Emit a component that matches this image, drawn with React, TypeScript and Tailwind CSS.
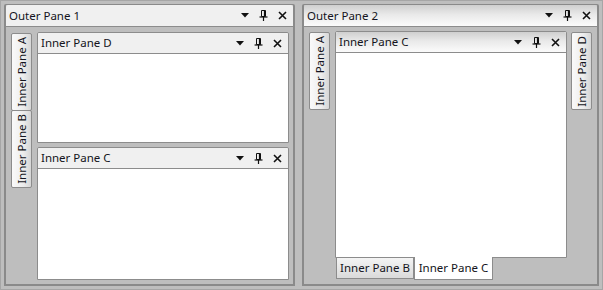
import React from 'react';

const font = { fontFamily: '"Noto Sans", "Open Sans", sans-serif' };

function PaneIcons() {
  return (
    <div className="flex items-center h-full">
      {/* dropdown */}
      <div className="w-[19px] flex justify-center">
        <svg width="8" height="5" viewBox="0 0 8 5">
          <path d="M0 0 H8 L4 4.5 Z" fill="#111" />
        </svg>
      </div>
      {/* pin */}
      <div className="w-[19px] flex justify-center">
        <svg width="9" height="11" viewBox="0 0 9 11">
          <path d="M2.5 0.5 H6.5 V6.5 H2.5 Z" fill="none" stroke="#111" strokeWidth="1" />
          <path d="M5.5 0.5 V6.5" stroke="#111" strokeWidth="1.2" />
          <path d="M0.5 7 H8.5" stroke="#111" strokeWidth="1.2" />
          <path d="M4.5 7 V11" stroke="#111" strokeWidth="1.2" />
        </svg>
      </div>
      {/* close */}
      <div className="w-[19px] flex justify-center">
        <svg width="9" height="9" viewBox="0 0 9 9">
          <path d="M1 1 L8 8 M8 1 L1 8" stroke="#111" strokeWidth="1.6" />
        </svg>
      </div>
    </div>
  );
}

function Header({ title, active, outer }: { title: string; active?: boolean; outer?: boolean }) {
  const bg = active
    ? 'bg-[linear-gradient(to_bottom,#cfcfcf,#e9e9e9_45%,#fbfbfb)]'
    : 'bg-[#f0f0f0]';
  return (
    <div
      className={`flex items-center justify-between shrink-0 border-b border-[#8c8c8c] rounded-t-[2px] pl-[3px] pr-[1px] ${bg} ${
        outer ? 'h-[22px]' : 'h-[21px]'
      }`}
    >
      <span className="text-[11.5px] leading-none text-[#141420] whitespace-nowrap">{title}</span>
      <PaneIcons />
    </div>
  );
}

function InnerPane({ title, active, className }: { title: string; active?: boolean; className?: string }) {
  return (
    <div className={`flex flex-col border border-[#8c8c8c] rounded-t-[2px] bg-white ${className ?? ''}`}>
      <Header title={title} active={active} />
      <div className="flex-1 bg-white" />
    </div>
  );
}

function SideTab({ label, className }: { label: string; className?: string }) {
  return (
    <div
      className={`w-[21px] h-[78px] flex items-center justify-center border border-[#8c8c8c] rounded-[2px] bg-[linear-gradient(to_right,#fafafa,#ececec_60%,#d6d6d6)] ${className ?? ''}`}
    >
      <span className="[writing-mode:vertical-rl] rotate-180 text-[11.5px] leading-none text-[#141420] whitespace-nowrap">
        {label}
      </span>
    </div>
  );
}

export default function App() {
  return (
    <div
      className="w-[603px] h-[290px] bg-[#bebebe] border border-[#a6a6a6] flex gap-[7px] pl-[3px] pt-[3px] pr-[3px] pb-[3px]"
      style={font}
    >
      {/* Outer Pane 1 */}
      <div className="w-[291px] flex flex-col border-2 border-t border-[#8a8a8a] rounded-t-[2px] bg-[#bebebe]">
        <Header title="Outer Pane 1" outer />
        <div className="flex-1 flex pt-[5px] pl-[5px] pr-[4px] pb-[4px] gap-[5px]">
          <div className="flex flex-col pt-[1px]">
            <SideTab label="Inner Pane A" />
            <SideTab label="Inner Pane B" className="-mt-px" />
          </div>
          <div className="flex-1 flex flex-col gap-[4px]">
            <InnerPane title="Inner Pane D" className="h-[111px]" />
            <InnerPane title="Inner Pane C" className="flex-1" />
          </div>
        </div>
      </div>

      {/* Outer Pane 2 */}
      <div className="flex-1 flex flex-col border-2 border-t border-[#8a8a8a] rounded-t-[2px] bg-[#bebebe]">
        <Header title="Outer Pane 2" outer active />
        <div className="flex-1 flex pt-[4px] pl-[5px] pr-[5px] pb-[4px] gap-[4px]">
          <div className="flex flex-col pt-[1px] mr-px">
            <SideTab label="Inner Pane A" />
          </div>
          <div className="flex-1 flex flex-col">
            <InnerPane title="Inner Pane C" active className="flex-1" />
            <div className="flex h-[22px] shrink-0 pl-px">
              <div className="h-[21px] w-[78px] flex items-center justify-center border border-t-0 border-[#8c8c8c] bg-[linear-gradient(to_bottom,#f4f4f4,#dadada)] text-[11.5px] leading-none text-[#141420] whitespace-nowrap">
                Inner Pane B
              </div>
              <div className="relative -mt-px h-[23px] w-[79px] flex items-center justify-center border border-t-0 border-[#8c8c8c] bg-white text-[11.5px] leading-none text-[#141420] whitespace-nowrap">
                Inner Pane C
              </div>
            </div>
          </div>
          <div className="flex flex-col pt-[1px]">
            <SideTab label="Inner Pane D" />
          </div>
        </div>
      </div>
    </div>
  );
}
